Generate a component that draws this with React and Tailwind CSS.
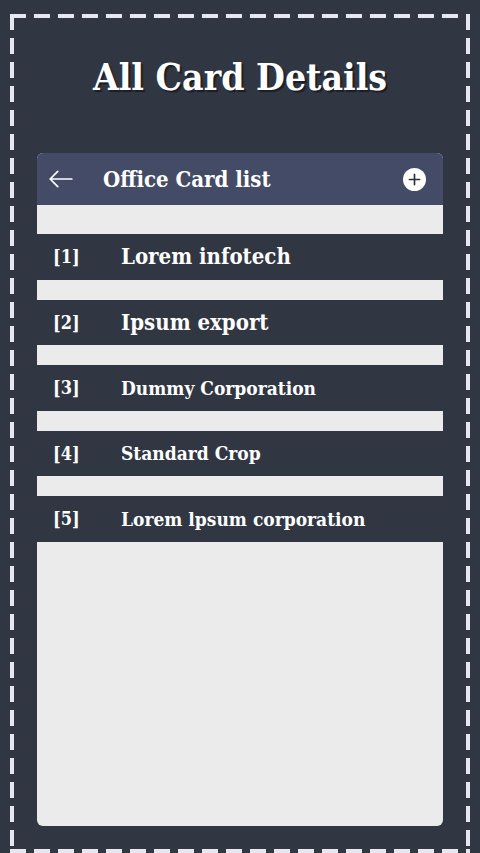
import React from 'react'

const companies = [
    { id: 1, name: 'Lorem infotech', big: true },
    { id: 2, name: 'Ipsum export', big: true },
    { id: 3, name: 'Dummy Corporation' },
    { id: 4, name: 'Standard Crop' },
    { id: 5, name: 'Lorem lpsum corporation' },
]

const App = () => {
    return (
        <div className="h-[853px] overflow-hidden bg-[#313643] pt-[14px] px-[10px] font-['DejaVu_Serif',serif]">
            {/* dashed frame drawn with gradients so the dashes can be 16px long */}
            <div className="h-[839px] p-[4px] bg-no-repeat [background-image:repeating-linear-gradient(90deg,#e6e7f0_0_16px,transparent_16px_24px),repeating-linear-gradient(90deg,#e6e7f0_0_16px,transparent_16px_24px),repeating-linear-gradient(180deg,#e6e7f0_0_16px,transparent_16px_24px),repeating-linear-gradient(180deg,#e6e7f0_0_16px,transparent_16px_24px)] [background-size:100%_4px,100%_4px,4px_100%,4px_100%] [background-position:0_0,0_100%,0_0,100%_0]">
                <div className="px-[23px]">
                    <h1 className="pt-[33px] text-center text-[37px] font-bold leading-[52px] text-white [text-shadow:2px_2px_1px_rgba(0,0,0,0.45)] font-stretch-condensed">
                        All Card Details
                    </h1>

                    <div className="mt-[50px] h-[673px] overflow-hidden rounded-md bg-[#ebebeb]">
                        <div className="flex h-[52px] items-center bg-[#434b66] pl-[11px] pr-[17px] text-white">
                            <svg className="h-[26px] w-[26px]" viewBox="0 0 24 24" fill="none" stroke="currentColor" strokeWidth="1.6" strokeLinecap="round" strokeLinejoin="round">
                                <path d="M22 12H2M9 5l-7 7 7 7" />
                            </svg>
                            <h2 className="ml-[29px] text-[22px] font-bold font-stretch-condensed">Office Card list</h2>
                            <button type="button" className="ml-auto flex h-[23px] w-[23px] items-center justify-center rounded-full bg-white text-[#2b2f3a]">
                                <svg className="h-[13px] w-[13px]" viewBox="0 0 14 14" fill="none" stroke="currentColor" strokeWidth="1.8" strokeLinecap="round">
                                    <path d="M7 1.5v11M1.5 7h11" />
                                </svg>
                            </button>
                        </div>

                        <ul className="flex flex-col gap-[20px] pt-[29px]">
                            {companies.map((c) => (
                                <li key={c.id} className="flex h-[45.5px] items-center bg-[#313643] pl-[16px] text-white font-stretch-condensed">
                                    <span className="w-[68px] text-[18px] font-bold">[{c.id}]</span>
                                    <span className={c.big ? 'text-[22px] font-bold' : 'text-[19px] font-bold'}>{c.name}</span>
                                </li>
                            ))}
                        </ul>
                    </div>
                </div>
            </div>
        </div>
    )
}

export default App
